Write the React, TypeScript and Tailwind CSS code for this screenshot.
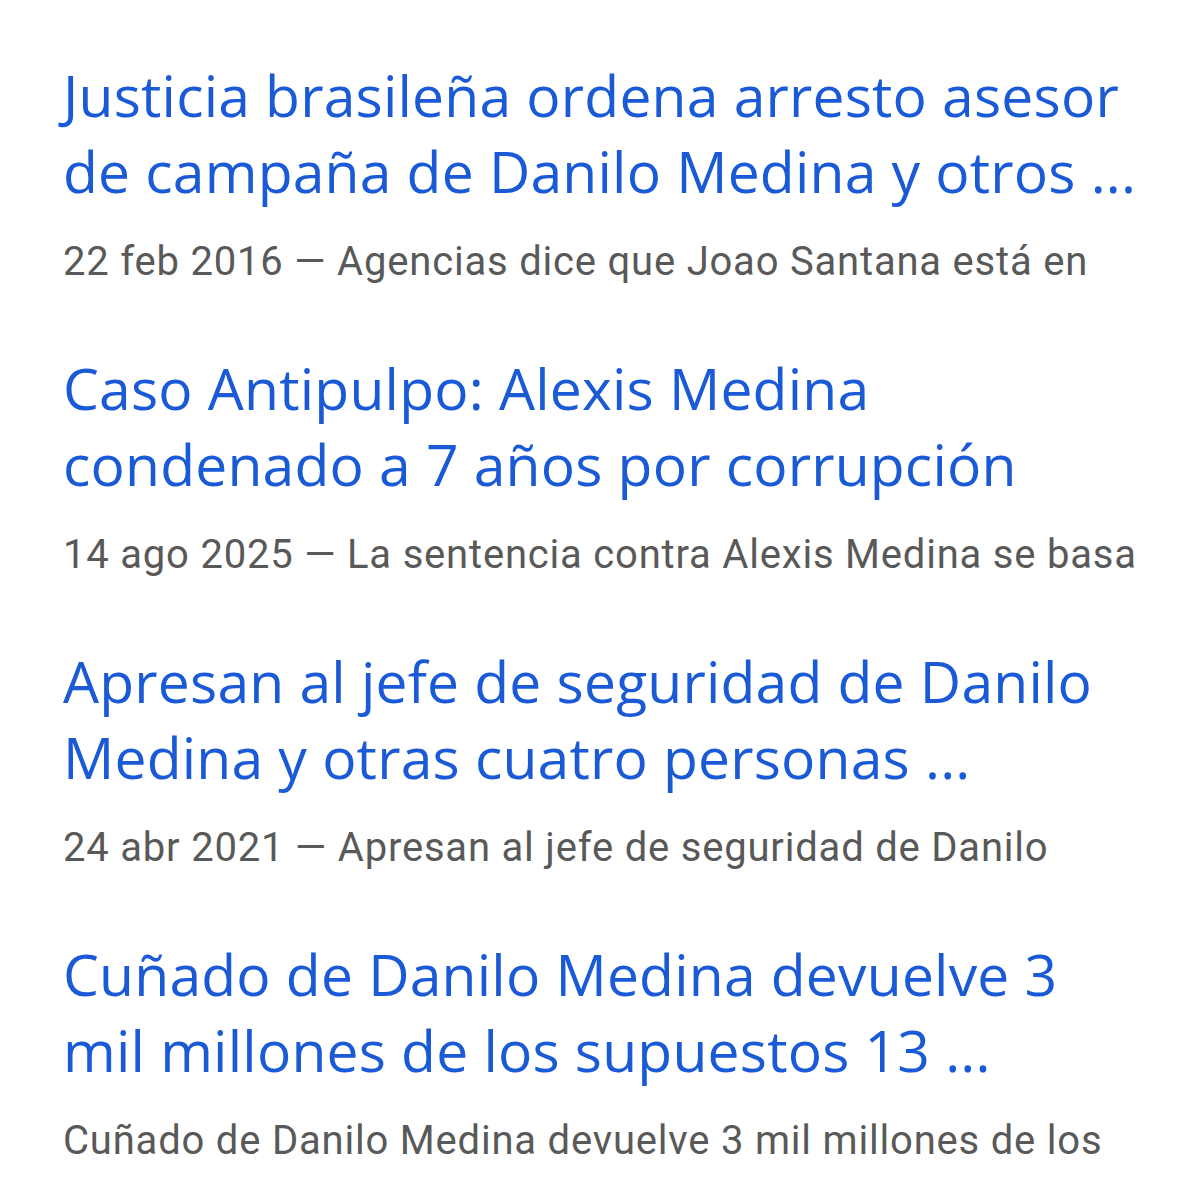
import React from "react";

const items = [
  {
    title: ["Justicia brasileña ordena arresto asesor", "de campaña de Danilo Medina y otros ..."],
    snippet: "22 feb 2016 — Agencias dice que Joao Santana está en",
  },
  {
    title: ["Caso Antipulpo: Alexis Medina", "condenado a 7 años por corrupción"],
    snippet: "14 ago 2025 — La sentencia contra Alexis Medina se basa",
  },
  {
    title: ["Apresan al jefe de seguridad de Danilo", "Medina y otras cuatro personas ..."],
    snippet: "24 abr 2021 — Apresan al jefe de seguridad de Danilo",
  },
  {
    title: ["Cuñado de Danilo Medina devuelve 3", "mil millones de los supuestos 13 ..."],
    snippet: "Cuñado de Danilo Medina devuelve 3 mil millones de los",
  },
];

export default function App() {
  return (
    <div className="w-[1200px] h-[1200px] overflow-hidden bg-white">
      <div className="flex flex-col pl-[63px] pt-[57px] gap-[64px]">
        {items.map((it, i) => (
          <div key={i} className="flex flex-col gap-[29px]">
            <div
              className="text-[#1a5ad7] text-[57px] leading-[76px] tracking-[0.2px]"
              style={{ fontFamily: "'Open Sans', sans-serif" }}
            >
              {it.title.map((l, j) => (
                <div key={j} className="whitespace-nowrap">{l}</div>
              ))}
            </div>
            <div
              className="text-[#595959] text-[40px] leading-[48px] tracking-[0.8px] whitespace-nowrap"
              style={{ fontFamily: "Roboto, sans-serif" }}
            >
              {it.snippet}
            </div>
          </div>
        ))}
      </div>
    </div>
  );
}
